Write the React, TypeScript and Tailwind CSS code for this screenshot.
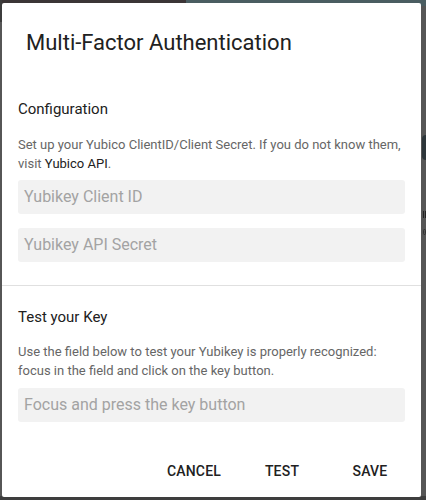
import React from "react";

export default function App() {
  return (
    <div
      className="relative w-[426px] h-[500px] overflow-hidden bg-[#565656]"
      style={{ fontFamily: "Roboto, 'Noto Sans', Arial, sans-serif" }}
    >
      {/* backdrop fragments */}
      <div className="absolute left-0 top-0 w-[186px] h-[6px] bg-[#3b3536]" />
      <div className="absolute left-[186px] top-0 w-[240px] h-[6px] bg-[#4a5d61]" />
      <div className="absolute left-0 top-0 w-[2px] h-[22px] bg-[#3c3c3c]" />
      <div className="absolute left-0 bottom-0 w-[426px] h-[4px] bg-[#3e3e3e]" />
      <div className="absolute left-[422px] top-[135px] w-[4px] h-[25px] rounded-l-sm bg-[#2d363a]" />
      <div className="absolute left-[423px] top-[211px] w-[1px] h-[7px] bg-[#222]" />
      <div className="absolute left-[425px] top-[211px] w-[1px] h-[7px] bg-[#222]" />
      <div className="absolute left-[423px] top-[229px] w-[3px] h-[6px] border border-[#333] rounded-sm" />

      {/* dialog */}
      <div className="relative ml-[2px] mt-[3px] w-[419px] h-[494px] bg-white rounded-[2px] flex flex-col">
        <div className="px-6 pt-6 h-[56px] text-[22px] leading-[32px] text-[#212121]">
          Multi-Factor Authentication
        </div>

        <div className="px-4">
          <div className="mt-[40px] text-[15px] leading-[20px] text-[#212121]">Configuration</div>
          <p className="mt-[16px] text-[13px] leading-[19px] text-[#666666]">
            Set up your Yubico ClientID/Client Secret. If you do not know them, visit{" "}
            <span className="text-[#212121]">Yubico API</span>.
          </p>
          <div className="mt-[7px] h-[34px] rounded-[3px] bg-[#f2f2f2] flex items-center pl-[6px] text-[16px] text-[#a3a3a3]">
            Yubikey Client ID
          </div>
          <div className="mt-[14px] h-[34px] rounded-[3px] bg-[#f2f2f2] flex items-center pl-[6px] text-[16px] text-[#a3a3a3]">
            Yubikey API Secret
          </div>
        </div>

        <div className="mt-[23px] h-px bg-[#e0e0e0]" />

        <div className="px-4">
          <div className="mt-[21px] text-[15px] leading-[20px] text-[#212121]">Test your Key</div>
          <p className="mt-[15px] text-[13px] leading-[19px] text-[#666666]">
            Use the field below to test your Yubikey is properly recognized: focus in the field and click on the key button.
          </p>
          <div className="mt-[8px] h-[34px] rounded-[3px] bg-[#f2f2f2] flex items-center pl-[6px] text-[16px] text-[#a3a3a3]">
            Focus and press the key button
          </div>
        </div>

        <div className="mt-auto flex justify-end px-[7px] pb-[8px]">
          {["CANCEL", "TEST", "SAVE"].map((t) => (
            <button
              key={t}
              className="w-[88px] h-9 flex items-center justify-center text-[14px] font-medium text-[#212121] tracking-[0.2px]"
            >
              {t}
            </button>
          ))}
        </div>
      </div>
    </div>
  );
}
